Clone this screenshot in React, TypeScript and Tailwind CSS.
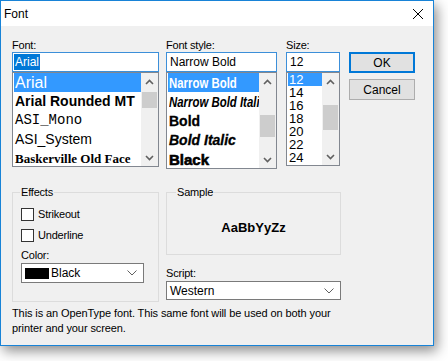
const ui = { fontFamily: '"Liberation Sans", Arial, sans-serif' }

function Chevron(props: { dir: "up" | "down" }) {
    return (
        <svg width="9" height="6" viewBox="0 0 9 6">
            <polyline
                points={props.dir === "up" ? "1,5 4.5,1.5 8,5" : "1,1 4.5,4.5 8,1"}
                fill="none"
                stroke="#606060"
                strokeWidth="1.6"
            />
        </svg>
    )
}

function ScrollBar(props: { thumbTop: number; thumbHeight: number }) {
    return (
        <div className="flex flex-col w-[17px] h-full bg-[#f0f0f0] shrink-0">
            <div className="h-[17px] flex items-center justify-center shrink-0">
                <Chevron dir="up" />
            </div>
            <div className="flex-1 relative">
                <div
                    className="absolute left-[1px] right-[1px] bg-[#cdcdcd]"
                    style={{ top: props.thumbTop, height: props.thumbHeight }}
                />
            </div>
            <div className="h-[17px] flex items-center justify-center shrink-0">
                <Chevron dir="down" />
            </div>
        </div>
    )
}

function DropChevron() {
    return (
        <svg width="10" height="6" viewBox="0 0 10 6">
            <polyline points="0.5,0.5 5,5 9.5,0.5" fill="none" stroke="#606060" strokeWidth="1" />
        </svg>
    )
}

function CheckBox(props: { label: string }) {
    return (
        <div className="flex items-center h-[13px]">
            <div className="w-[13px] h-[13px] border border-[#333333] bg-white" />
            <span className="ml-[4px] text-[11px] leading-[13px] tracking-[-0.2px]">{props.label}</span>
        </div>
    )
}

export default function App() {
    return (
        <div className="w-[448px] h-[361px] bg-white text-black" style={ui}>
            <div className="w-[434px] h-[346px] border border-[#1883d7] flex flex-col shadow-[3px_5px_12px_rgba(0,0,0,0.45)]">
                <div className="h-[25px] bg-white flex items-center justify-between pl-[3px] pr-[9px] shrink-0">
                    <span className="text-[12px]">Font</span>
                    <svg width="12" height="12" viewBox="0 0 12 12">
                        <path d="M1 1 L11 11 M11 1 L1 11" stroke="#000" strokeWidth="1" />
                    </svg>
                </div>
                <div className="flex-1 bg-[#f0f0f0] px-[11px] pt-[12px] text-[11px] tracking-[-0.2px]">
                    <div className="flex">
                        {/* font name */}
                        <div className="w-[147px] flex flex-col">
                            <div className="h-[14px] leading-[14px]">Font:</div>
                            <div className="h-[20px] border border-[#3c8fd9] bg-white flex items-center px-[1px] tracking-normal">
                                <span className="bg-[#0078d7] text-white text-[12px] leading-[16px] px-[1px]">Arial</span>
                            </div>
                            <div className="h-[95px] border border-[#828790] bg-white flex overflow-hidden tracking-normal">
                                <div className="flex-1 flex flex-col pl-[1px] overflow-hidden">
                                    <div className="h-[19px] bg-[#3399ff] text-white text-[16px] leading-[19px] pl-[1px] shrink-0">Arial</div>
                                    <div className="h-[19px] text-[14px] font-bold leading-[19px] pl-[1px] whitespace-nowrap shrink-0">Arial Rounded MT</div>
                                    <div className="h-[19px] text-[14px] leading-[19px] pl-[1px] shrink-0" style={{ fontFamily: '"Liberation Mono", monospace' }}>ASI_Mono</div>
                                    <div className="h-[19px] text-[14px] leading-[19px] pl-[1px] shrink-0">ASI_System</div>
                                    <div className="h-[19px] text-[13px] font-semibold leading-[19px] pl-[1px] whitespace-nowrap shrink-0" style={{ fontFamily: '"Liberation Serif", serif' }}>Baskerville Old Face</div>
                                </div>
                                <ScrollBar thumbTop={2} thumbHeight={16} />
                            </div>
                        </div>

                        {/* font style */}
                        <div className="w-[111px] ml-[7px] flex flex-col">
                            <div className="h-[14px] leading-[14px]">Font style:</div>
                            <div className="h-[20px] border border-[#3c8fd9] bg-white flex items-center px-[3px] text-[12px] tracking-normal">Narrow Bold</div>
                            <div className="h-[97px] border border-[#828790] bg-white flex overflow-hidden tracking-normal">
                                <div className="flex-1 flex flex-col pl-[1px] overflow-hidden">
                                    <div className="h-[19px] bg-[#3399ff] text-white text-[15px] font-bold leading-[19px] pl-[1px] shrink-0 whitespace-nowrap">
                                        <span className="inline-block origin-left scale-x-[0.76]">Narrow Bold</span>
                                    </div>
                                    <div className="h-[20px] text-[15px] font-bold italic leading-[20px] pl-[1px] whitespace-nowrap shrink-0">
                                        <span className="inline-block origin-left scale-x-[0.76]">Narrow Bold Italic</span>
                                    </div>
                                    <div className="h-[19px] text-[14px] font-bold leading-[19px] pl-[1px] shrink-0 [-webkit-text-stroke:0.3px_black]">Bold</div>
                                    <div className="h-[19px] text-[14px] font-bold italic leading-[19px] pl-[1px] shrink-0 [-webkit-text-stroke:0.3px_black]">Bold Italic</div>
                                    <div className="h-[20px] text-[15px] font-black leading-[20px] pl-[1px] shrink-0 [-webkit-text-stroke:0.6px_black]">Black</div>
                                </div>
                                <ScrollBar thumbTop={25} thumbHeight={22} />
                            </div>
                        </div>

                        {/* size */}
                        <div className="w-[54px] ml-[9px] flex flex-col">
                            <div className="h-[14px] leading-[14px]">Size:</div>
                            <div className="h-[20px] border border-[#3c8fd9] bg-white flex items-center px-[3px] text-[12px] tracking-normal">12</div>
                            <div className="h-[94px] border border-[#828790] bg-white flex overflow-hidden tracking-normal">
                                <div className="flex-1 flex flex-col pl-[1px] text-[13px]">
                                    {["12", "14", "16", "18", "20", "22", "24"].map((s, i) => (
                                        <div
                                            key={s}
                                            className={i === 0 ? "h-[13px] leading-[13px] pl-[1px] bg-[#3399ff] text-white shrink-0" : "h-[13px] leading-[13px] pl-[1px] shrink-0"}
                                        >
                                            {s}
                                        </div>
                                    ))}
                                </div>
                                <ScrollBar thumbTop={15} thumbHeight={25} />
                            </div>
                        </div>

                        {/* buttons */}
                        <div className="w-[66px] ml-[9px] flex flex-col pt-[14px] gap-[6px] tracking-normal">
                            <button className="h-[21px] border-2 border-[#0078d7] bg-[#e1e1e1] text-[12px]">OK</button>
                            <button className="h-[21px] border border-[#adadad] bg-[#e1e1e1] text-[12px]">Cancel</button>
                        </div>
                    </div>

                    <div className="flex mt-[16px]">
                        <fieldset className="w-[147px] h-[117px] border border-[#dcdcdc] px-[7px] flex flex-col">
                            <legend className="px-[1px] leading-[14px]">Effects</legend>
                            <div className="pl-[1px] flex flex-col">
                                <div className="mt-[9px]"><CheckBox label="Strikeout" /></div>
                                <div className="mt-[8px]"><CheckBox label="Underline" /></div>
                                <div className="mt-[6px] h-[14px] leading-[14px]">Color:</div>
                                <div className="mt-[1px] w-[123px] h-[20px] border border-[#7a7a7a] bg-white flex items-center pl-[3px] pr-[6px] tracking-normal">
                                    <div className="w-[24px] h-[11px] bg-black" />
                                    <span className="ml-[2px] text-[12px] flex-1">Black</span>
                                    <DropChevron />
                                </div>
                            </div>
                        </fieldset>

                        <div className="w-[175px] ml-[7px] flex flex-col">
                            <fieldset className="h-[70px] border border-[#dcdcdc] px-[9px] flex flex-col">
                                <legend className="px-[1px] leading-[14px]">Sample</legend>
                                <div className="flex justify-center pt-[21px] text-[13px] font-bold leading-[16px] tracking-normal">AaBbYyZz</div>
                            </fieldset>
                            <div className="mt-[11px] h-[14px] leading-[14px]">Script:</div>
                            <div className="mt-[1px] h-[19px] border border-[#7a7a7a] bg-white flex items-center pl-[3px] pr-[6px] tracking-normal">
                                <span className="flex-1 text-[12px]">Western</span>
                                <DropChevron />
                            </div>
                        </div>
                    </div>

                    <p className="mt-[4px] text-[11px] leading-[15px] tracking-[-0.1px]">
                        This is an OpenType font. This same font will be used on both your
                        <br />
                        printer and your screen.
                    </p>
                </div>
            </div>
        </div>
    )
}
